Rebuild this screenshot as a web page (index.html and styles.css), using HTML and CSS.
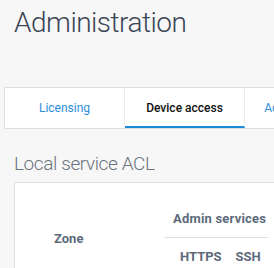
FILE: index.html
```html
<!DOCTYPE html>
<html lang="en">
<head>
    <meta charset="UTF-8">
    <meta name="viewport" content="width=device-width, initial-scale=1.0">
    <title>Administration</title>
    <link rel="stylesheet" href="styles.css">
</head>
<body>
    <h1 class="page-title">Administration</h1>

    <div class="tabs">
        <a class="tab" href="#">Licensing</a>
        <a class="tab active" href="#">Device access</a>
        <a class="tab" href="#">Admin settings</a>
    </div>

    <h2 class="section-title">Local service ACL</h2>

    <div class="card">
        <table class="acl">
            <thead>
                <tr>
                    <th class="zone" rowspan="2">Zone</th>
                    <th class="group" colspan="2">Admin services</th>
                </tr>
                <tr>
                    <th class="svc first">HTTPS</th>
                    <th class="svc">SSH</th>
                </tr>
            </thead>
        </table>
    </div>
</body>
</html>
```

FILE: styles.css
```css
html, body {
    overflow: hidden;
}
body {
    font-family: Roboto, 'Noto Sans', sans-serif;
    margin: 0;
    padding: 0 0 0 4px;
    background-color: #f7f7f7;
    color: #333;
    width: 600px;
    height: 268px;
}
.page-title {
    font-size: 28px;
    font-weight: 300;
    letter-spacing: -0.5px;
    color: #3a4556;
    margin: 0;
    padding: 6px 0 0 10px;
    line-height: 34px;
}
.tabs {
    display: flex;
    margin-top: 47px;
    background-color: white;
    border: 1px solid #dedede;
    height: 40px;
}
.tab {
    width: 120px;
    display: flex;
    align-items: center;
    justify-content: center;
    font-size: 12px;
    color: #2a8fd8;
    text-decoration: none;
    border-right: 1px solid #ececec;
    box-sizing: border-box;
    border-bottom: 2px solid transparent;
    padding-top: 2px;
}
.tab.active {
    color: #111;
    border-bottom-color: #1a8ad6;
    font-weight: 500;
}
.section-title {
    font-size: 19px;
    font-weight: 300;
    letter-spacing: -0.4px;
    color: #6a737d;
    margin: 0;
    padding: 21px 0 0 10px;
    line-height: 28px;
}
.card {
    margin: 4px 0 0 10px;
    background-color: white;
    border: 1px solid #dedede;
    border-radius: 3px;
    padding: 20px 0 0 0;
    height: 200px;
}
.acl {
    border-collapse: collapse;
    font-size: 13px;
    color: #5d6a7a;
}
.acl th {
    font-weight: bold;
    padding: 0;
}
.zone {
    width: 150px;
    text-align: left;
    vertical-align: middle;
    padding-left: 39px !important;
    box-sizing: border-box;
}
.group {
    text-align: left;
    height: 31px;
    padding: 0 0 3px 8px !important;
    border-bottom: 1px solid #dedede;
    letter-spacing: 0.2px;
}
.svc {
    height: 36px;
    padding: 0 7px !important;
}
.svc.first {
    padding-left: 15px !important;
}
```
